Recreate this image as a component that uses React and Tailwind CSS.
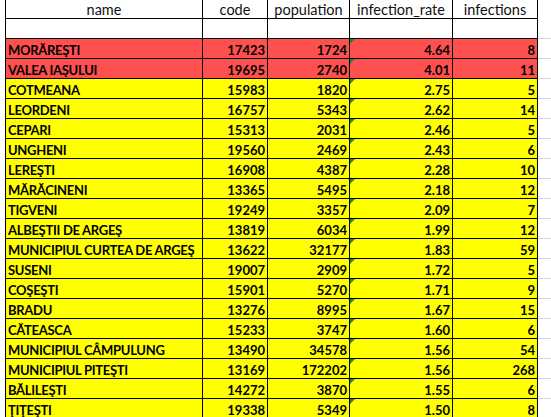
import React from "react";

const rows = [
  ["MORĂREŞTI", "17423", "1724", "4.64", "8", "red"],
  ["VALEA IAŞULUI", "19695", "2740", "4.01", "11", "red"],
  ["COTMEANA", "15983", "1820", "2.75", "5"],
  ["LEORDENI", "16757", "5343", "2.62", "14"],
  ["CEPARI", "15313", "2031", "2.46", "5"],
  ["UNGHENI", "19560", "2469", "2.43", "6"],
  ["LEREŞTI", "16908", "4387", "2.28", "10"],
  ["MĂRĂCINENI", "13365", "5495", "2.18", "12"],
  ["TIGVENI", "19249", "3357", "2.09", "7"],
  ["ALBEŞTII DE ARGEŞ", "13819", "6034", "1.99", "12"],
  ["MUNICIPIUL CURTEA DE ARGEŞ", "13622", "32177", "1.83", "59"],
  ["SUSENI", "19007", "2909", "1.72", "5"],
  ["COŞEŞTI", "15901", "5270", "1.71", "9"],
  ["BRADU", "13276", "8995", "1.67", "15"],
  ["CĂTEASCA", "15233", "3747", "1.60", "6"],
  ["MUNICIPIUL CÂMPULUNG", "13490", "34578", "1.56", "54"],
  ["MUNICIPIUL PITEŞTI", "13169", "172202", "1.56", "268"],
  ["BĂLILEŞTI", "14272", "3870", "1.55", "6"],
  ["ŢIŢEŞTI", "19338", "5349", "1.50", "8"],
];

const cell = "h-full border-r border-b border-black flex items-end pb-[1px] overflow-hidden whitespace-nowrap";

const App = () => {
  return (
    <div className="w-[551px] h-[417px] overflow-hidden bg-white text-black font-['Lato','Liberation_Sans',sans-serif] text-[13px] leading-none">
      {/* header */}
      <div className="flex h-[19px] pl-[5px] text-[14.5px] text-[#111]">
        <div className={`${cell} border-l w-[198px] justify-center`}>name</div>
        <div className={`${cell} w-[65px] justify-center`}>code</div>
        <div className={`${cell} w-[82px] justify-center`}>population</div>
        <div className={`${cell} w-[103px] justify-center`}>infection_rate</div>
        <div className={`${cell} w-[85px] justify-center`}>infections</div>
        <div className="flex-1" />
      </div>

      {/* blank row */}
      <div className="flex h-[20px] pl-[5px]">
        <div className={`${cell} border-l w-[198px]`} />
        <div className={`${cell} w-[65px]`} />
        <div className={`${cell} w-[82px]`} />
        <div className={`${cell} w-[103px]`} />
        <div className={`${cell} w-[85px]`} />
        <div className="flex-1 border-b border-[#d0d7e5]" />
      </div>

      {rows.map(([name, code, pop, rate, inf, color]) => {
        const bg = color === "red" ? "bg-[#ff5050]" : "bg-[#ffff00]";
        return (
          <div key={name} className="flex h-[20px] pl-[5px] font-bold">
            <div className={`${cell} ${bg} border-l w-[198px] pl-[2px] tracking-[-0.3px]`}>{name}</div>
            <div className={`${cell} ${bg} w-[65px] justify-end pr-[2px]`}>{code}</div>
            <div className={`${cell} ${bg} w-[82px] justify-end pr-[2px]`}>{pop}</div>
            <div className={`${cell} ${bg} w-[103px] justify-end pr-[2px] relative`}>
              <span className="absolute left-0 top-0 w-0 h-0 border-t-[5px] border-r-[5px] border-t-[#1e8b3a] border-r-transparent" />
              {rate}
            </div>
            <div className={`${cell} ${bg} w-[85px] justify-end pr-[2px]`}>{inf}</div>
            <div className="flex-1 border-b border-[#d0d7e5]" />
          </div>
        );
      })}
    </div>
  );
};

export default App;
